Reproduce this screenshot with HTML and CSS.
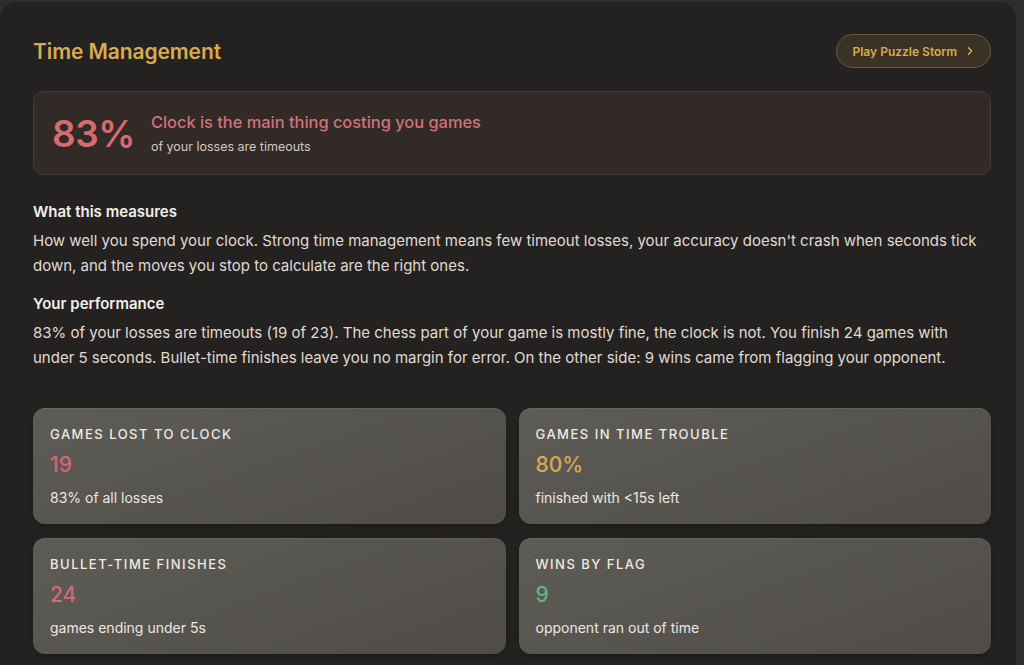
FILE: index.html
```html
<!DOCTYPE html>
<html lang="en">
<head>
  <meta charset="UTF-8">
  <meta name="viewport" content="width=device-width, initial-scale=1.0">
  <title>Time Management</title>
  <link rel="stylesheet" href="styles.css">
</head>
<body>
  <section class="panel">
    <header class="panel-head">
      <h2>Time Management</h2>
      <a class="storm-btn" href="#">Play Puzzle Storm
        <svg width="10" height="10" viewBox="0 0 10 10"><path d="M3.5 1.8 L6.7 5 L3.5 8.2" fill="none" stroke="currentColor" stroke-width="1.5" stroke-linecap="round" stroke-linejoin="round"/></svg>
      </a>
    </header>

    <div class="callout">
      <div class="callout-num">83%</div>
      <div class="callout-text">
        <h3>Clock is the main thing costing you games</h3>
        <p>of your losses are timeouts</p>
      </div>
    </div>

    <div class="block">
      <h4>What this measures</h4>
      <p>How well you spend your clock. Strong time management means few timeout losses, your accuracy doesn't crash when seconds tick down, and the moves you stop to calculate are the right ones.</p>
    </div>

    <div class="block">
      <h4>Your performance</h4>
      <p>83% of your losses are timeouts (19 of 23). The chess part of your game is mostly fine, the clock is not. You finish 24 games with under 5 seconds. Bullet-time finishes leave you no margin for error. On the other side: 9 wins came from flagging your opponent.</p>
    </div>

    <div class="stats">
      <div class="stat">
        <div class="stat-label">Games lost to clock</div>
        <div class="stat-value red">19</div>
        <div class="stat-sub">83% of all losses</div>
      </div>
      <div class="stat">
        <div class="stat-label">Games in time trouble</div>
        <div class="stat-value gold">80%</div>
        <div class="stat-sub">finished with &lt;15s left</div>
      </div>
      <div class="stat">
        <div class="stat-label">Bullet-time finishes</div>
        <div class="stat-value red">24</div>
        <div class="stat-sub">games ending under 5s</div>
      </div>
      <div class="stat">
        <div class="stat-label">Wins by flag</div>
        <div class="stat-value green">9</div>
        <div class="stat-sub">opponent ran out of time</div>
      </div>
    </div>
  </section>
</body>
</html>
```

FILE: styles.css
```css
/* Reset */
* {
  margin: 0;
  padding: 0;
  box-sizing: border-box;
}

body {
  font-family: 'Inter', 'Lato', sans-serif;
  background-color: #302e2c;
  color: #e6e0d9;
  padding: 2px 8px 0 0;
  height: 100vh;
  overflow: hidden;
}

.panel {
  background-color: #242220;
  border-radius: 16px 16px 0 0;
  padding: 32px 25px 40px 33px;
  height: 100%;
}

.panel-head {
  display: flex;
  justify-content: space-between;
  align-items: center;
  height: 34px;
  margin-bottom: 23px;
}

.panel-head h2 {
  font-size: 21px;
  font-weight: 600;
  color: #d8ab52;
  letter-spacing: -0.1px;
}

.storm-btn {
  display: flex;
  align-items: center;
  gap: 8px;
  height: 34px;
  padding: 0 15px;
  border-radius: 17px;
  border: 1px solid #6a5a36;
  background-color: #3a3224;
  color: #d8ab52;
  font-size: 12px;
  font-weight: 600;
  text-decoration: none;
}

.callout {
  display: flex;
  align-items: center;
  gap: 16px;
  height: 84px;
  padding: 0 18px;
  background-color: #322a27;
  border: 1px solid #4a3733;
  border-radius: 10px;
  margin-bottom: 27px;
}

.callout-num {
  font-size: 37px;
  font-weight: 600;
  color: #d66b70;
  letter-spacing: -0.5px;
}

.callout-text h3 {
  font-size: 16.4px;
  font-weight: 500;
  color: #d4707a;
  margin-bottom: 7px;
}

.callout-text p {
  font-size: 12.5px;
  color: #cfc8c1;
}

.block {
  margin-bottom: 16px;
}

.block h4 {
  font-size: 15px;
  font-weight: 600;
  color: #f2eeea;
  margin-bottom: 7px;
}

.block p {
  font-size: 15px;
  line-height: 25px;
  color: #e0dad3;
}

.stats {
  display: grid;
  grid-template-columns: 1fr 1fr;
  gap: 14px 13px;
  margin-top: 38px;
}

.stat {
  height: 116px;
  padding: 18px 17px;
  border-radius: 12px;
  background: linear-gradient(160deg, #5e5c56 0%, #4f4c47 100%);
  box-shadow: inset 0 1px 0 rgba(255, 255, 255, 0.07), 0 2px 4px rgba(0, 0, 0, 0.25);
}

.stat-label {
  font-size: 13px;
  font-weight: 500;
  text-transform: uppercase;
  letter-spacing: 1.5px;
  color: #eeeae4;
}

.stat-value {
  font-size: 21px;
  font-weight: 500;
  margin: 10px 0 12px;
}

.stat-value.red { color: #d06a72; }
.stat-value.gold { color: #d8ab52; }
.stat-value.green { color: #5fb77e; }

.stat-sub {
  font-size: 14px;
  color: #ece7e1;
}
```
